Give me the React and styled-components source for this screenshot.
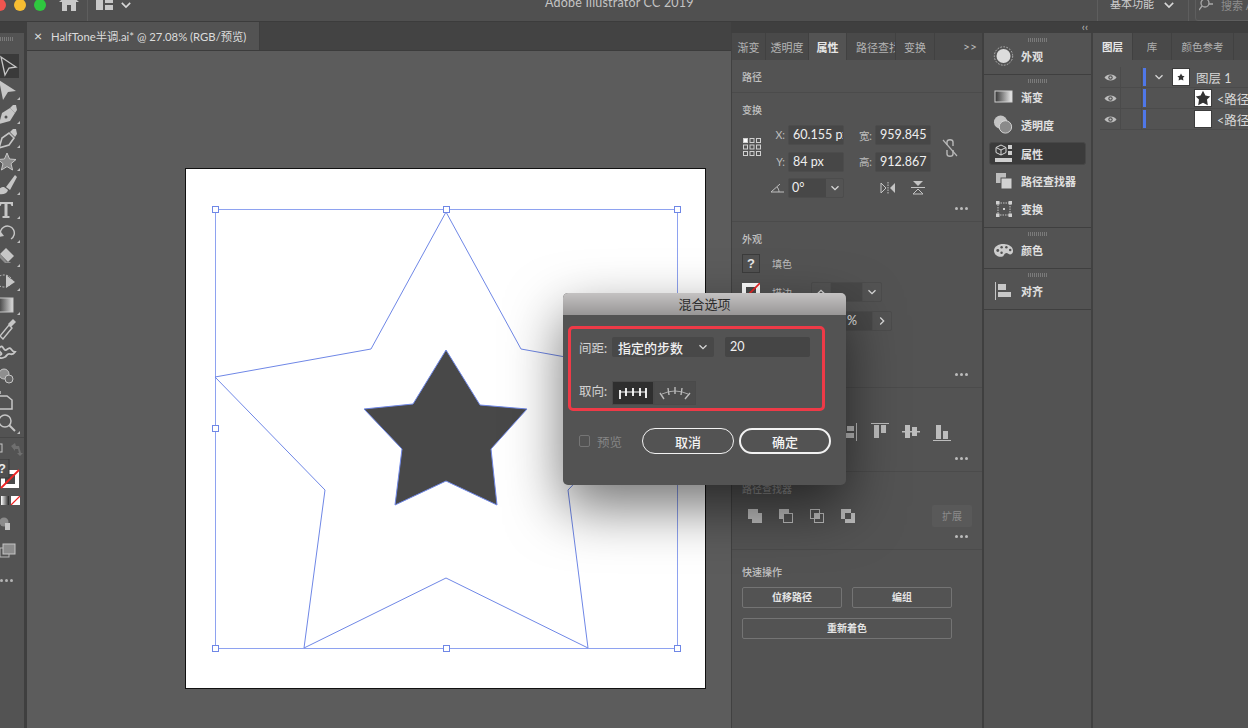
import styled, { createGlobalStyle } from "styled-components";

const GlobalStyle = createGlobalStyle`
    html, body {
        margin: 0;
        padding: 0;
        background: #3f3f3f;
    }
    * {
        box-sizing: border-box;
    }
`;

const ICON = "#c6c6c6";

// ---- toolbar drawings, all on a 22x22 box
const toolIcons = [
    { more: false, on: true, svg: <path d="M1 2l15 10-7 1-4 7z" fill="none" stroke={ICON} strokeWidth="1.3" /> },
    { more: true, svg: <path d="M-1 1l17 11-8 1-5 8z" fill={ICON} /> },
    { more: true, svg: <><path d="M-1 21l3-11 8-5 5 5-5 8z" fill={ICON} /><path d="M10 5l3-3 3 0 1 5-2 3" fill={ICON} /><circle cx="6" cy="14" r="1.5" fill="#535353" /></> },
    { more: true, svg: <><path d="M-1 21l3-10 7-5 5 5-5 7z" fill="none" stroke={ICON} strokeWidth="1.6" /><path d="M10 5l3-3 3 0 1 5-2 3z" fill={ICON} /></> },
    { more: true, svg: <path d="M7 2l2.6 6 6.4.5-5 4.2 1.6 6.3L7 15.6 1.4 19 3 12.7-2 8.5 4.4 8z" fill="#8b8b8b" stroke={ICON} strokeWidth="1" /> },
    { more: true, svg: <><path d="M6 13L15 1l2 2-7 13z" fill={ICON} /><path d="M-2 20c0-5 2-7 6-7l4 3c-1 4-5 5-10 4z" fill={ICON} /></> },
    { more: true, svg: <path d="M-1 4h14v4h-1.500l-1-2H7.500v12h2v2H2.500v-2h2V6H1.500l-1 2H-1z" fill={ICON} /> },
    { more: true, svg: <><path d="M1 14a7 7 0 1 1 10 3" fill="none" stroke={ICON} strokeWidth="1.4" /><path d="M1 10l3 4-5 1z" fill={ICON} /></> },
    { more: true, svg: <><path d="M6 2l8 8-6 6-8-8z" fill={ICON} /><path d="M0 8l-2 2 7 7h5l1-1-4 0z" fill="#8d8d8d" /></> },
    { more: true, svg: <><ellipse cx="4" cy="11" rx="8" ry="6" fill="none" stroke={ICON} strokeDasharray="2 1.5" /><path d="M6 5l9 7-9 6z" fill={ICON} /></> },
    { more: true, svg: <rect x="-4" y="4" width="17" height="14" fill="url(#toolGrad)" stroke={ICON} /> },
    { more: false, svg: <><path d="M0 18L9 7l3 3-9 11z" fill="none" stroke={ICON} strokeWidth="1.4" /><path d="M8 6l5-5 3 3-5 5z" fill={ICON} /></> },
    { more: false, svg: <path d="M0 5c3-2 3 2 5 3s4-4 6-1 4 3 4 3-2 3-5 2-3 2-5 3-5 2-6 0 4-2 2-4-3-4-1-6z" fill="none" stroke={ICON} strokeWidth="1.8" /> },
    { more: false, svg: <><circle cx="4" cy="8" r="5" fill="#8f8f8f" stroke={ICON} /><circle cx="9" cy="13" r="4" fill="#666" stroke={ICON} /></> },
    { more: false, svg: <path d="M-2 7h9l5 4v9H-2z M0 2v3" fill="none" stroke={ICON} strokeWidth="1.5" /> },
    { more: true, svg: <><circle cx="5" cy="8" r="6" fill="none" stroke={ICON} strokeWidth="1.5" /><path d="M9 12l6 6" stroke={ICON} strokeWidth="2" /></> },
];

const Dots = () => (
    <DotsRow>
        <i /><i /><i />
    </DotsRow>
);

const Chevron = ({ size = 10, color = "#d8d8d8", up, right }) => (
    <svg width={size} height={size} viewBox="0 0 10 10" style={right ? { transform: "rotate(-90deg)" } : up ? { transform: "rotate(180deg)" } : undefined}>
        <path d="M1.5 3.200L5 6.700l3.500-3.500" fill="none" stroke={color} strokeWidth="1.3" />
    </svg>
);

const dockIcons = {
    appearance: (
        <svg width="24" height="24" viewBox="0 0 24 24">
            <circle cx="12" cy="12" r="8" fill="#dcdcdc" />
            <circle cx="12" cy="12" r="10.5" fill="none" stroke="#bdbdbd" strokeDasharray="2 1.5" />
        </svg>
    ),
    gradient: (
        <svg width="20" height="16" viewBox="0 0 20 16">
            <defs>
                <linearGradient id="dockGrad">
                    <stop offset="0" stopColor="#333" />
                    <stop offset="1" stopColor="#eee" />
                </linearGradient>
            </defs>
            <rect x="1" y="2" width="17" height="11" fill="url(#dockGrad)" stroke="#d0d0d0" />
        </svg>
    ),
    opacity: (
        <svg width="22" height="22" viewBox="0 0 22 22">
            <circle cx="8" cy="8" r="7" fill="#c4c4c4" />
            <circle cx="13" cy="13" r="6.5" fill="#8a8a8a" stroke="#d6d6d6" />
        </svg>
    ),
    props: (
        <svg width="20" height="20" viewBox="0 0 20 20">
            <path d="M7 1l5 2.500v5L7 11 2 8.500v-5z" fill="none" stroke="#d8d8d8" />
            <path d="M2 3.500L7 6l5-2.500M7 6v5" fill="none" stroke="#d8d8d8" />
            <rect x="14" y="1" width="4" height="4" fill="#cfcfcf" />
            <rect x="14" y="7" width="4" height="4" fill="#cfcfcf" />
            <rect x="1" y="14" width="17" height="4" fill="#cfcfcf" />
        </svg>
    ),
    pathfinder: (
        <svg width="18" height="18" viewBox="0 0 18 18">
            <rect x="1" y="1" width="10" height="10" fill="#bdbdbd" />
            <rect x="6" y="6" width="11" height="11" fill="#d2d2d2" stroke="#535353" />
        </svg>
    ),
    transform: (
        <svg width="18" height="18" viewBox="0 0 18 18">
            <rect x="3" y="3" width="12" height="12" fill="none" stroke="#c4c4c4" strokeDasharray="1.5 1" />
            <g fill="#d0d0d0">
                <rect x="1" y="1" width="3.5" height="3.5" />
                <rect x="13.5" y="1" width="3.5" height="3.5" />
                <rect x="1" y="13.5" width="3.5" height="3.5" />
                <rect x="13.5" y="13.5" width="3.5" height="3.5" />
                <rect x="8" y="8" width="2" height="2" />
            </g>
        </svg>
    ),
    color: (
        <svg width="22" height="16" viewBox="0 0 22 16">
            <path d="M1 9c0-5 6-8 12-7 5 .8 8 3 8 7 0 3-3 5-5 3s-4 0-5 2-9 2-10-5z" fill="#cdcdcd" />
            <g fill="#535353">
                <circle cx="5" cy="8.5" r="1.5" />
                <circle cx="9" cy="5" r="1.3" />
                <circle cx="14" cy="5" r="1.3" />
                <circle cx="18" cy="8" r="1.3" />
                <circle cx="9" cy="11" r="1.3" />
            </g>
        </svg>
    ),
    align: (
        <svg width="18" height="20" viewBox="0 0 18 20">
            <rect x="0" y="1" width="1" height="18" fill="#c4c4c4" />
            <rect x="3" y="3" width="8" height="6" fill="#c8c8c8" />
            <rect x="3" y="11" width="13" height="5" fill="#c8c8c8" />
        </svg>
    ),
};

const dockGroups = [
    { items: [{ key: "appearance", label: "外观" }], height: 42 },
    {
        items: [
            { key: "gradient", label: "渐变" },
            { key: "opacity", label: "透明度" },
            { key: "props", label: "属性", active: true },
            { key: "pathfinder", label: "路径查找器" },
            { key: "transform", label: "变换" },
        ],
        height: 153,
    },
    { items: [{ key: "color", label: "颜色" }], height: 41 },
    { items: [{ key: "align", label: "对齐" }], height: 41 },
];

const panelTabs = [
    { label: "渐变", w: 34 },
    { label: "透明度", w: 43 },
    { label: "属性", w: 38, active: true },
    { label: "路径查找器", w: 49, clipped: true },
    { label: "变换", w: 39 },
];

const OUTER = "446,212 521,349 677,377 568,490 588,648 446,578 304,648 325,490 215,377 371,349";
const INNER = "446,350 480,405 527,409 491,449 497,505 446,481 395,505 402,449 364,409 413,404";
const HANDLES = [
    [215, 209], [446, 209], [677, 209],
    [215, 428], [677, 428],
    [215, 648], [446, 648], [677, 648],
];

const App = () => {
    return (
        <Page>
            <GlobalStyle />
            <TopBar>
                <TrafficLights>
                    <Light $c="#f0554f" />
                    <Light $c="#f7bd32" />
                    <Light $c="#2fc73f" />
                </TrafficLights>
                <HomeIcon width="20" height="18" viewBox="0 0 20 18">
                    <path d="M10 0L0 9h3v9h5v-6h4v6h5V9h3z" fill="#c8c8c8" />
                </HomeIcon>
                <BarDivider />
                <svg width="18" height="12" viewBox="0 0 18 12">
                    <rect x="0" y="0" width="7" height="11" fill="#c8c8c8" />
                    <rect x="9" y="0" width="8" height="4" fill="#c8c8c8" />
                    <rect x="9" y="6" width="8" height="5" fill="#c8c8c8" />
                </svg>
                <BarChevron><Chevron size={12} /></BarChevron>
                <AppTitle>Adobe Illustrator CC 2019</AppTitle>
                <BarDivider />
                <Workspace>基本功能</Workspace>
                <BarChevron $ml={9} $mr={5}><Chevron size={12} /></BarChevron>
                <BarDivider />
                <SearchBox>
                    <SearchGlass width="14" height="14" viewBox="0 0 14 14">
                        <circle cx="6" cy="5" r="4" fill="none" stroke="#a8a8a8" strokeWidth="1.3" />
                        <path d="M3 8L0 12M10 6h4" stroke="#a8a8a8" strokeWidth="1.3" />
                    </SearchGlass>
                    <SearchText>搜索 Adobe</SearchText>
                </SearchBox>
            </TopBar>

            <Workarea>
                <Toolbar>
                    <GripLine />
                    <ToolList>
                        {toolIcons.map((t, i) => (
                            <Tool key={i} $on={t.on} $more={t.more}>
                                <svg width="22" height="22" viewBox="0 0 22 22">
                                    <defs>
                                        <linearGradient id="toolGrad">
                                            <stop offset="0" stopColor="#222" />
                                            <stop offset="1" stopColor="#ddd" />
                                        </linearGradient>
                                    </defs>
                                    {t.svg}
                                </svg>
                            </Tool>
                        ))}
                    </ToolList>
                    <ToolRule />
                    <SwapRow>
                        <svg width="24" height="20" viewBox="0 0 24 20">
                            <rect x="-3" y="5" width="5" height="8" fill="none" stroke="#c6c6c6" />
                            <path d="M11 7l4-3 1 3h3l2 7 2 0-3 3-3-3h2l-1-4h-3l0 2z" fill="#6f6f6f" />
                        </svg>
                    </SwapRow>
                    <svg width="24" height="32" viewBox="0 0 24 32">
                        <rect x="1" y="11" width="18" height="18" fill="#fff" />
                        <rect x="5" y="15" width="10" height="10" fill="#4b4b4b" />
                        <path d="M1 29L19 11" stroke="#f02424" strokeWidth="1.8" />
                        <rect x="-2" y="0" width="11" height="19" fill="#505050" stroke="#3a3a3a" />
                        <text x="-2" y="14" fontSize="13" fontWeight="700" fill="#eaeaea" fontFamily="Liberation Sans, sans-serif">?</text>
                    </svg>
                    <ModeRow>
                        <svg width="20" height="9" viewBox="0 0 20 9">
                            <defs>
                                <linearGradient id="modeGrad">
                                    <stop offset="0" stopColor="#fff" />
                                    <stop offset="1" stopColor="#222" />
                                </linearGradient>
                            </defs>
                            <rect x="0" y="0" width="8" height="9" fill="url(#modeGrad)" />
                            <rect x="10" y="0" width="9" height="9" fill="#fff" />
                            <path d="M10 9L19 0" stroke="#f02424" strokeWidth="1.2" />
                        </svg>
                    </ModeRow>
                    <DrawRow>
                        <svg width="20" height="18" viewBox="0 0 20 18">
                            <circle cx="4" cy="7" r="4.5" fill="#8b8b8b" />
                            <rect x="5" y="8" width="5" height="7" fill="#c4c4c4" />
                        </svg>
                    </DrawRow>
                    <DrawRow>
                        <svg width="20" height="18" viewBox="0 0 20 18">
                            <rect x="0" y="5" width="9" height="9" fill="none" stroke="#b8b8b8" />
                            <rect x="3" y="1" width="12" height="10" fill="#8c8c8c" stroke="#c4c4c4" />
                        </svg>
                    </DrawRow>
                    <ToolDots>
                        <i /><i /><i />
                    </ToolDots>
                </Toolbar>

                <DocColumn>
                    <DocTabs>
                        <DocTab>
                            <CloseMark>×</CloseMark>
                            HalfTone半调.ai* @ 27.08% (RGB/预览)
                        </DocTab>
                    </DocTabs>
                    <Canvas>
                        <Artboard>
                            <svg width="519" height="519" viewBox="186 169 519 519">
                                <rect x="215.5" y="209.5" width="462" height="439" fill="none" stroke="#8ea2f0" />
                                <polygon points={OUTER} fill="none" stroke="#6f87e6" />
                                <polygon points={INNER} fill="#484848" stroke="#6f87e6" />
                                {HANDLES.map(([x, y]) => (
                                    <rect key={`${x}-${y}`} x={x - 2.5} y={y - 2.5} width="6" height="6" fill="#fff" stroke="#6f87e6" />
                                ))}
                            </svg>
                        </Artboard>
                    </Canvas>
                </DocColumn>

                <PropsPanel>
                    <TabStrip>
                        {panelTabs.map(t => (
                            <PanelTab key={t.label} $w={t.w} $active={t.active} $clipped={t.clipped}>{t.label}</PanelTab>
                        ))}
                        <TabFill>&gt;&gt;</TabFill>
                    </TabStrip>

                    <Section $h={33}>
                        <Heading>路径</Heading>
                    </Section>

                    <Section $h={129}>
                        <Heading>变换</Heading>
                        <TransformBody>
                            <RefPoint width="20" height="20" viewBox="0 0 20 20">
                                {[1.5, 8, 14.5].map(y => [1.5, 8, 14.5].map(x => (
                                    <rect key={`${x}${y}`} x={x} y={y} width="4" height="4" fill={x < 2 && y < 2 ? "#fff" : "none"} stroke="#d0d0d0" />
                                )))}
                            </RefPoint>
                            <FieldGrid>
                                <FieldLabel>X:</FieldLabel>
                                <Field><Clip>60.155 px</Clip></Field>
                                <FieldLabel>宽:</FieldLabel>
                                <Field><Clip>959.845</Clip></Field>
                                <FieldLabel>Y:</FieldLabel>
                                <Field>84 px</Field>
                                <FieldLabel>高:</FieldLabel>
                                <Field><Clip>912.867</Clip></Field>
                                <FieldLabel>
                                    <svg width="15" height="10" viewBox="0 0 15 10">
                                        <path d="M14 9H1L10 1M7 4c1 1 2 3 2 5" fill="none" stroke="#c0c0c0" />
                                    </svg>
                                </FieldLabel>
                                <AngleField>
                                    <AngleValue>0°</AngleValue>
                                    <AngleDrop><Chevron /></AngleDrop>
                                </AngleField>
                                <span />
                                <FlipIcons>
                                    <svg width="16" height="12" viewBox="0 0 16 12">
                                        <path d="M1 1l5 5-5 5z" fill="none" stroke="#c4c4c4" />
                                        <path d="M15 1l-5 5 5 5z" fill="#c4c4c4" />
                                        <path d="M8 0v12" stroke="#c4c4c4" strokeDasharray="1.5 1" />
                                    </svg>
                                    <svg width="14" height="14" viewBox="0 0 14 14">
                                        <path d="M2 0h10L7 5z" fill="#c4c4c4" />
                                        <path d="M2 13h10L7 8z" fill="none" stroke="#c4c4c4" />
                                        <path d="M0 6.500h14" stroke="#c4c4c4" />
                                    </svg>
                                </FlipIcons>
                            </FieldGrid>
                            <LinkIcon width="18" height="20" viewBox="0 0 18 20">
                                <path d="M6 4c0-3 6-3 6 0v4M6 12v4c0 3 6 3 6 0v-4M6 4v3" fill="none" stroke="#b8b8b8" strokeWidth="1.4" />
                                <path d="M2 2l14 16" stroke="#b8b8b8" strokeWidth="1.2" />
                            </LinkIcon>
                        </TransformBody>
                        <Dots />
                    </Section>

                    <Section $h={166}>
                        <Heading>外观</Heading>
                        <SwatchRow>
                            <QuestionBox>?</QuestionBox>
                            <RowLabel>填色</RowLabel>
                        </SwatchRow>
                        <StrokeRow>
                            <StrokeSwatch width="18" height="18" viewBox="0 0 18 18">
                                <rect x="0" y="0" width="18" height="18" fill="#fff" />
                                <rect x="4" y="4" width="10" height="10" fill="#4b4b4b" />
                                <path d="M0 18L18 0" stroke="#f02424" strokeWidth="1.6" />
                            </StrokeSwatch>
                            <RowLabel>描边</RowLabel>
                            <Stepper>
                                <StepBtn><Chevron up /></StepBtn>
                                <StepMid />
                                <StepBtn><Chevron /></StepBtn>
                            </Stepper>
                        </StrokeRow>
                        <OpacityRow>
                            <Stepper>
                                <StepMid $w={52} $percent>%</StepMid>
                                <StepBtn><Chevron right /></StepBtn>
                            </Stepper>
                        </OpacityRow>
                        <Dots />
                    </Section>

                    <Section $h={84}>
                        <Heading>对齐</Heading>
                        <AlignRow>
                            {[0, 1, 2].map(i => <AlignSpacer key={i} />)}
                            <svg width="14" height="18" viewBox="0 0 14 18">
                                <rect x="3" y="3" width="7" height="5" fill="#bdbdbd" />
                                <rect x="0" y="10" width="10" height="5" fill="#bdbdbd" />
                                <rect x="12" y="0" width="1" height="18" fill="#bdbdbd" />
                            </svg>
                            <svg width="18" height="18" viewBox="0 0 18 18">
                                <rect x="0" y="0" width="18" height="1" fill="#bdbdbd" />
                                <rect x="3" y="2" width="5" height="13" fill="#bdbdbd" />
                                <rect x="10" y="2" width="5" height="8" fill="#bdbdbd" />
                            </svg>
                            <svg width="18" height="18" viewBox="0 0 18 18">
                                <rect x="0" y="8" width="18" height="1.5" fill="#bdbdbd" />
                                <rect x="3" y="2" width="5" height="13" fill="#bdbdbd" />
                                <rect x="10" y="4" width="5" height="9" fill="#bdbdbd" />
                            </svg>
                            <svg width="18" height="18" viewBox="0 0 18 18">
                                <rect x="0" y="17" width="18" height="1" fill="#bdbdbd" />
                                <rect x="3" y="2" width="5" height="14" fill="#bdbdbd" />
                                <rect x="10" y="8" width="5" height="8" fill="#bdbdbd" />
                            </svg>
                        </AlignRow>
                        <Dots />
                    </Section>

                    <Section $h={78}>
                        <Heading $dim>路径查找器</Heading>
                        <FinderRow>
                            <FinderIcons>
                                <svg width="15" height="15" viewBox="0 0 15 15">
                                    <rect x="0" y="0" width="10" height="10" fill="#bdbdbd" />
                                    <rect x="4" y="4" width="10" height="10" fill="#bdbdbd" />
                                </svg>
                                <svg width="15" height="15" viewBox="0 0 15 15">
                                    <path d="M0 0h10v4H4v6H0z" fill="#bdbdbd" />
                                    <rect x="4.5" y="4.5" width="9" height="9" fill="none" stroke="#bdbdbd" />
                                </svg>
                                <svg width="15" height="15" viewBox="0 0 15 15">
                                    <rect x=".5" y=".5" width="9" height="9" fill="none" stroke="#bdbdbd" />
                                    <rect x="4.5" y="4.5" width="9" height="9" fill="none" stroke="#bdbdbd" />
                                    <rect x="4" y="4" width="6" height="6" fill="#bdbdbd" />
                                </svg>
                                <svg width="15" height="15" viewBox="0 0 15 15">
                                    <rect x="0" y="0" width="10" height="10" fill="#bdbdbd" />
                                    <rect x="4" y="4" width="10" height="10" fill="#bdbdbd" />
                                    <rect x="4" y="4" width="6" height="6" fill="#535353" />
                                </svg>
                            </FinderIcons>
                            <ExpandButton>扩展</ExpandButton>
                        </FinderRow>
                        <Dots />
                    </Section>

                    <QuickSection>
                        <Heading>快速操作</Heading>
                        <QuickGrid>
                            <QuickButton>位移路径</QuickButton>
                            <QuickButton>编组</QuickButton>
                            <QuickButton $wide>重新着色</QuickButton>
                        </QuickGrid>
                    </QuickSection>
                </PropsPanel>

                <DockColumn>
                    <CollapseStrip>‹‹</CollapseStrip>
                    <Dock>
                        {dockGroups.map((g, i) => (
                            <DockGroup key={i} $h={g.height}>
                                <DockGrip />
                                {g.items.map(item => (
                                    <DockItem key={item.key} $active={item.active}>
                                        <DockIcon>{dockIcons[item.key]}</DockIcon>
                                        {item.label}
                                    </DockItem>
                                ))}
                            </DockGroup>
                        ))}
                    </Dock>
                </DockColumn>

                <LayersPanel>
                    <TabStrip>
                        <LayerTab $w={40} $active>图层</LayerTab>
                        <LayerTab $w={39}>库</LayerTab>
                        <LayerTab $w={62}>颜色参考</LayerTab>
                        <TabFill />
                    </TabStrip>
                    <LayerList>
                        <LayerRow>
                            <EyeCell><Eye /></EyeCell>
                            <BlankCell />
                            <BlueBar />
                            <LayerChevron><Chevron /></LayerChevron>
                            <Thumb>
                                <svg width="8" height="8" viewBox="0 0 20 20">
                                    <polygon points="10,1 13,7 19,8 15,12 16,19 10,16 4,19 5,12 1,8 7,7" fill="#333" />
                                </svg>
                            </Thumb>
                            <LayerName>图层 1</LayerName>
                        </LayerRow>
                        <LayerRow>
                            <EyeCell><Eye /></EyeCell>
                            <BlankCell />
                            <BlueBar />
                            <SubIndent />
                            <Thumb>
                                <svg width="16" height="16" viewBox="0 0 20 20">
                                    <polygon points="10,1 13,7 19,8 15,12 16,19 10,16 4,19 5,12 1,8 7,7" fill="#333" />
                                </svg>
                            </Thumb>
                            <LayerName $path>&lt;路径&gt;</LayerName>
                        </LayerRow>
                        <LayerRow>
                            <EyeCell><Eye /></EyeCell>
                            <BlankCell />
                            <BlueBar />
                            <SubIndent />
                            <Thumb />
                            <LayerName $path>&lt;路径&gt;</LayerName>
                        </LayerRow>
                    </LayerList>
                </LayersPanel>
            </Workarea>

            <Dialog>
                <DialogTitle>混合选项</DialogTitle>
                <RedFrame>
                    <SpacingRow>
                        <DialogLabel>间距:</DialogLabel>
                        <DialogSelect>
                            指定的步数
                            <Chevron />
                        </DialogSelect>
                        <DialogInput>20</DialogInput>
                    </SpacingRow>
                    <OrientRow>
                        <DialogLabel $raised>取向:</DialogLabel>
                        <Segment $on>
                            <svg width="30" height="16" viewBox="0 0 30 16">
                                <path d="M2 7h26" stroke="#fff" strokeWidth="1.2" />
                                <path d="M2 5v9M8 3v8M15 3v8M22 3v8M28 3v10" stroke="#fff" strokeWidth="1.8" />
                            </svg>
                        </Segment>
                        <Segment>
                            <svg width="34" height="16" viewBox="0 0 34 16">
                                <path d="M4 9q13-6 26 0" fill="none" stroke="#aaa" />
                                <path d="M2 8l4 6M10 3l1 7M17 2v7M24 3l-1 7M32 8l-5 6" stroke="#bbb" strokeWidth="1.4" />
                            </svg>
                        </Segment>
                    </OrientRow>
                </RedFrame>
                <DialogFooter>
                    <PreviewBox />
                    <PreviewText>预览</PreviewText>
                    <PillButton>取消</PillButton>
                    <PillButton $primary>确定</PillButton>
                </DialogFooter>
            </Dialog>
        </Page>
    );
};

const Eye = () => (
    <svg width="13" height="9" viewBox="0 0 13 9">
        <path d="M.5 4.500C3 .5 10 .5 12.500 4.500 10 8.500 3 8.500 .5 4.500z" fill="#bdbdbd" />
        <circle cx="6.5" cy="4.5" r="2.2" fill="#535353" />
        <circle cx="6.5" cy="4.5" r="1.1" fill="#bdbdbd" />
    </svg>
);

export default App;

const FONT = `Lato, "Noto Sans CJK SC", sans-serif`;

const Page = styled.div`
    position: relative;
    width: 1248px;
    height: 728px;
    overflow: hidden;
    display: flex;
    flex-direction: column;
    background: #3f3f3f;
    font-family: ${FONT};
    color: #cfcfcf;
    font-size: 11px;
`;

const TopBar = styled.div`
    height: 22px;
    flex: none;
    display: flex;
    align-items: flex-end;
    background: #505050;
    border-bottom: 1px solid #3c3c3c;
    overflow: hidden;
    padding-bottom: 10px;
    > * {
        flex-shrink: 0;
    }
`;

const TrafficLights = styled.div`
    display: flex;
    gap: 8px;
    margin-left: -6px;
`;

const Light = styled.span`
    width: 12px;
    height: 12px;
    border-radius: 50%;
    background: ${props => props.$c};
`;

const HomeIcon = styled.svg`
    margin-left: 13px;
    flex: none;
`;

const BarDivider = styled.span`
    width: 1px;
    height: 24px;
    margin: 0 8px -10px;
    background: #5e5e5e;
    flex: none;
`;

const BarChevron = styled.span`
    display: flex;
    margin-left: ${props => props.$ml || 6}px;
    margin-right: ${props => props.$mr || 0}px;
`;

const AppTitle = styled.div`
    font-size: 12.5px;
    line-height: 16px;
    color: #c4c4c4;
    letter-spacing: 0.2px;
    margin-left: 413px;
    width: 544px;
    flex: none;
    white-space: nowrap;
`;

const Workspace = styled.div`
    font-size: 11px;
    line-height: 15px;
    color: #cfcfcf;
    margin-left: 4px;
    white-space: nowrap;
`;

const SearchBox = styled.div`
    display: flex;
    align-items: center;
    gap: 8px;
    width: 60px;
    flex: none;
    height: 24px;
    margin: 0 0 -10px -2px;
    padding: 0 0 8px 3px;
    border: 1px solid #5e5e5e;
    border-radius: 3px;
    overflow: hidden;
`;

const SearchGlass = styled.svg`
    flex: none;
`;

const SearchText = styled.span`
    color: #8d8d8d;
    font-size: 11px;
    white-space: nowrap;
`;

const Workarea = styled.div`
    flex: 1;
    min-height: 0;
    display: flex;
`;

const Toolbar = styled.div`
    width: 24px;
    flex: none;
    margin: 11px 3px 0 0;
    background: #535353;
    overflow: hidden;
    display: flex;
    flex-direction: column;
    align-items: flex-start;
`;

const GripLine = styled.div`
    width: 14px;
    height: 4px;
    margin: 4px 0 13px;
    background: repeating-linear-gradient(90deg, #7a7a7a 0 1px, transparent 1px 2px);
`;

const ToolList = styled.div`
    display: flex;
    flex-direction: column;
`;

const Tool = styled.div`
    position: relative;
    width: 24px;
    height: 23.9px;
    display: flex;
    align-items: center;
    justify-content: flex-start;
    ${props => props.$on && "background: linear-gradient(90deg, #3a3a3a 0 19px, transparent 19px);"}
    &::after {
        content: "";
        display: ${props => (props.$more ? "block" : "none")};
        position: absolute;
        right: 4px;
        bottom: 2px;
        border-style: solid;
        border-width: 0 0 3px 3px;
        border-color: transparent transparent #bdbdbd transparent;
    }
`;

const ToolRule = styled.div`
    width: 100%;
    height: 1px;
    margin-top: 1px;
    background: #474747;
`;

const SwapRow = styled.div`
    height: 21px;
    display: flex;
    align-items: center;
`;

const ModeRow = styled.div`
    display: flex;
    height: 9px;
    margin: 5px 0 0 1px;
`;

const DrawRow = styled.div`
    display: flex;
    height: 18px;
    margin-top: 10px;
`;

const ToolDots = styled.div`
    display: flex;
    gap: 2px;
    margin-top: 18px;
    i {
        width: 3px;
        height: 3px;
        border-radius: 50%;
        background: #b4b4b4;
    }
`;

const DocColumn = styled.div`
    width: 704px;
    flex: none;
    display: flex;
    flex-direction: column;
`;

const DocTabs = styled.div`
    height: 29px;
    flex: none;
    display: flex;
    background: #434343;
    border-bottom: 1px solid #3c3c3c;
`;

const DocTab = styled.div`
    width: 233px;
    display: flex;
    align-items: center;
    background: #535353;
    border-right: 1px solid #3f3f3f;
    color: #dcdcdc;
    font-size: 11.3px;
    white-space: nowrap;
    padding-left: 7px;
`;

const CloseMark = styled.span`
    width: 17px;
    font-size: 14px;
    line-height: 14px;
    color: #e2e2e2;
`;

const Canvas = styled.div`
    flex: 1;
    background: #5c5c5c;
    padding: 117px 0 0 158px;
`;

const Artboard = styled.div`
    width: 521px;
    height: 521px;
    background: #fff;
    border: 1px solid #111;
    display: flex;
`;

const PropsPanel = styled.div`
    width: 251px;
    flex: none;
    margin-top: 11px;
    background: #535353;
    border-left: 1px solid #414141;
    display: flex;
    flex-direction: column;
`;

const TabStrip = styled.div`
    height: 27px;
    flex: none;
    display: flex;
    background: #494949;
`;

const PanelTab = styled.div`
    width: ${props => props.$w}px;
    flex: none;
    display: flex;
    align-items: center;
    justify-content: ${props => (props.$clipped ? "flex-start" : "center")};
    padding-left: ${props => (props.$clipped ? 9 : 0)}px;
    overflow: hidden;
    white-space: nowrap;
    font-size: 11px;
    color: ${props => (props.$active ? "#e8e8e8" : "#b4b4b4")};
    font-weight: ${props => (props.$active ? 700 : 400)};
    background: ${props => (props.$active ? "#535353" : "transparent")};
    border-right: 1px solid #414141;
`;

const TabFill = styled.div`
    flex: 1;
    display: flex;
    align-items: center;
    justify-content: flex-end;
    padding-right: 5px;
    font-size: 12px;
    color: #b8b8b8;
    overflow: hidden;
`;

const Section = styled.div`
    position: relative;
    height: ${props => props.$h}px;
    flex: none;
    padding: 10px 10px 0;
    border-bottom: 1px solid #4b4b4b;
`;

const Heading = styled.div`
    font-size: 10px;
    line-height: 14px;
    font-weight: 500;
    color: ${props => (props.$dim ? "#8f8f8f" : "#c2c2c2")};
`;

const DotsRow = styled.div`
    position: absolute;
    right: 14px;
    bottom: 11px;
    display: flex;
    gap: 1.5px;
    i {
        width: 3.5px;
        height: 3.5px;
        border-radius: 50%;
        background: #bcbcbc;
    }
`;

const TransformBody = styled.div`
    display: flex;
    align-items: flex-start;
    margin-top: 8px;
`;

const RefPoint = styled.svg`
    flex: none;
    margin-top: 12px;
`;

const FieldGrid = styled.div`
    display: grid;
    grid-template-columns: 26px 56px 31px 56px;
    grid-auto-rows: 20px;
    row-gap: 6.5px;
    align-items: center;
`;

const FieldLabel = styled.div`
    justify-self: end;
    padding-right: 3px;
    color: #bdbdbd;
    font-size: 10.5px;
    display: flex;
`;

const Field = styled.div`
    width: 56px;
    height: 20px;
    padding-left: 4px;
    background: #474747;
    border: 1px solid #4c4c4c;
    border-radius: 2px;
    color: #efefef;
    font-size: 12.5px;
    line-height: 18px;
    overflow: hidden;
    white-space: nowrap;
`;

const Clip = styled.span`
    display: block;
    overflow: hidden;
`;

const AngleField = styled.div`
    display: flex;
    width: 56px;
    height: 20px;
    border: 1px solid #4c4c4c;
    border-radius: 2px;
`;

const AngleValue = styled.div`
    flex: 1;
    background: #474747;
    padding-left: 3px;
    color: #efefef;
    font-size: 12.5px;
    line-height: 18px;
`;

const AngleDrop = styled.div`
    width: 18px;
    display: flex;
    align-items: center;
    justify-content: center;
    border-left: 1px solid #474747;
`;

const FlipIcons = styled.div`
    display: flex;
    align-items: center;
    gap: 15px;
    padding-left: 5px;
`;

const LinkIcon = styled.svg`
    flex: none;
    margin: 13px 0 0 10px;
`;

const SwatchRow = styled.div`
    display: flex;
    align-items: center;
    margin-top: 8px;
`;

const QuestionBox = styled.div`
    width: 18px;
    height: 19px;
    border: 1px solid #3c3c3c;
    background: #515151;
    color: #e6e6e6;
    font: 700 13px/17px "Liberation Sans", sans-serif;
    text-align: center;
`;

const RowLabel = styled.span`
    margin-left: 12px;
    color: #bdbdbd;
    font-size: 10px;
    width: 39px;
`;

const StrokeRow = styled.div`
    display: flex;
    align-items: center;
    margin-top: 9px;
`;

const StrokeSwatch = styled.svg`
    flex: none;
`;

const Stepper = styled.div`
    display: flex;
    height: 20px;
    border: 1px solid #4c4c4c;
    border-radius: 2px;
`;

const StepBtn = styled.div`
    width: 18px;
    display: flex;
    align-items: center;
    justify-content: center;
`;

const StepMid = styled.div`
    width: ${props => props.$w || 33}px;
    background: #484848;
    border: solid #4f4f4f;
    border-width: 0 1px;
    color: #e6e6e6;
    font-size: 12.5px;
    line-height: 18px;
    text-align: ${props => (props.$percent ? "right" : "center")};
    padding-right: ${props => (props.$percent ? 15 : 0)}px;
`;

const OpacityRow = styled.div`
    display: flex;
    justify-content: flex-end;
    margin: 9px 80px 0 0;
`;

const AlignRow = styled.div`
    display: flex;
    align-items: center;
    justify-content: flex-end;
    gap: 13px;
    height: 18px;
    margin: 11px 21px 0 0;
`;

const AlignSpacer = styled.span`
    width: 18px;
`;

const FinderRow = styled.div`
    display: flex;
    align-items: center;
    justify-content: space-between;
    margin-top: 9px;
`;

const FinderIcons = styled.div`
    display: flex;
    gap: 16px;
    padding-left: 6px;
`;

const ExpandButton = styled.div`
    width: 40px;
    height: 22px;
    background: #595959;
    border-radius: 2px;
    color: #8c8c8c;
    font-size: 10px;
    line-height: 22px;
    text-align: center;
`;

const QuickSection = styled.div`
    padding: 15px 10px 0;
`;

const QuickGrid = styled.div`
    display: grid;
    grid-template-columns: 100px 100px;
    grid-auto-rows: 21px;
    gap: 10px;
    margin-top: 8px;
`;

const QuickButton = styled.div`
    grid-column: ${props => (props.$wide ? "1 / 3" : "auto")};
    border: 1px solid #747474;
    border-radius: 2px;
    color: #e4e4e4;
    font-size: 10px;
    font-weight: 700;
    line-height: 19px;
    text-align: center;
`;

const DockColumn = styled.div`
    width: 111px;
    flex: none;
    display: flex;
    flex-direction: column;
    padding-left: 2px;
`;

const CollapseStrip = styled.div`
    height: 11px;
    flex: none;
    text-align: right;
    padding-right: 5px;
    font-size: 11px;
    line-height: 10px;
    color: #bcbcbc;
`;

const Dock = styled.div`
    flex: 1;
    background: #535353;
    border-right: 2px solid #414141;
`;

const DockGroup = styled.div`
    height: ${props => props.$h}px;
    border-bottom: 1px solid #3f3f3f;
    padding-top: 4px;
    &:first-child {
        padding-top: 5px;
    }
`;

const DockGrip = styled.div`
    width: 20px;
    height: 4px;
    margin: 0 auto;
    background: repeating-linear-gradient(90deg, #7a7a7a 0 1px, transparent 1px 2px);
`;

const DockItem = styled.div`
    display: flex;
    align-items: center;
    height: 28px;
    margin: 0 ${props => (props.$active ? 5 : 0)}px;
    padding-left: ${props => (props.$active ? 3 : 9)}px;
    color: #e0e0e0;
    font-size: 11px;
    font-weight: 700;
    ${props => props.$active && `
        height: 23px;
        margin-top: 3px;
        margin-bottom: 2px;
        background: #3b3b3b;
        border: 1px solid #474747;
        border-radius: 3px;
    `}
`;

const DockIcon = styled.span`
    width: 28px;
    flex: none;
    display: flex;
    align-items: center;
    justify-content: center;
    padding-right: 7px;
`;

const LayersPanel = styled.div`
    flex: 1;
    min-width: 0;
    margin-top: 11px;
    background: #535353;
    display: flex;
    flex-direction: column;
    overflow: hidden;
`;

const LayerTab = styled.div`
    width: ${props => props.$w}px;
    flex: none;
    display: flex;
    align-items: center;
    justify-content: center;
    font-size: 10.5px;
    white-space: nowrap;
    color: ${props => (props.$active ? "#e8e8e8" : "#b0b0b0")};
    font-weight: ${props => (props.$active ? 700 : 400)};
    background: ${props => (props.$active ? "#535353" : "transparent")};
    border-right: 1px solid #414141;
`;

const LayerList = styled.div`
    margin: 7px 0 0 7px;
`;

const LayerRow = styled.div`
    height: 21px;
    width: 160px;
    display: flex;
    align-items: center;
    border-bottom: 1px solid #4b4b4b;
`;

const EyeCell = styled.div`
    width: 21px;
    height: 100%;
    flex: none;
    display: flex;
    align-items: center;
    justify-content: center;
    border-right: 1px solid #4b4b4b;
`;

const BlankCell = styled.div`
    width: 21px;
    height: 100%;
    flex: none;
    border-right: 1px solid #4b4b4b;
`;

const BlueBar = styled.div`
    width: 3px;
    height: 18px;
    margin-left: 1px;
    flex: none;
    background: #4f77e8;
`;

const LayerChevron = styled.div`
    width: 26px;
    padding-left: 8px;
    display: flex;
    flex: none;
`;

const SubIndent = styled.div`
    width: 48px;
    flex: none;
`;

const Thumb = styled.div`
    width: 18px;
    height: 18px;
    flex: none;
    background: #fff;
    border: 1px solid #3c3c3c;
    display: flex;
    align-items: center;
    justify-content: center;
`;

const LayerName = styled.div`
    margin-left: ${props => (props.$path ? 5 : 6)}px;
    color: #d8d8d8;
    font-size: 12.5px;
    white-space: nowrap;
`;

const Dialog = styled.div`
    position: absolute;
    left: 563px;
    top: 293px;
    width: 283px;
    height: 192px;
    background: #535353;
    border-radius: 5px;
    box-shadow: 0 22px 55px rgba(0, 0, 0, 0.55);
    display: flex;
    flex-direction: column;
    overflow: hidden;
`;

const DialogTitle = styled.div`
    height: 22px;
    flex: none;
    background: linear-gradient(#c4c2c2, #989696);
    color: #2b2b2b;
    font-size: 13px;
    line-height: 22px;
    text-align: center;
`;

const RedFrame = styled.div`
    width: 257px;
    height: 85px;
    margin: 11px 0 0 5px;
    padding: 8px 0 0 8px;
    border: 3px solid #ee3a47;
    border-radius: 5px;
`;

const SpacingRow = styled.div`
    display: flex;
    align-items: center;
`;

const DialogLabel = styled.div`
    width: 33px;
    flex: none;
    color: #d4d4d4;
    font-size: 12.5px;
    white-space: nowrap;
    margin-bottom: ${props => (props.$raised ? 5 : 0)}px;
`;

const DialogSelect = styled.div`
    width: 102px;
    height: 20px;
    flex: none;
    padding: 0 6px;
    display: flex;
    align-items: center;
    justify-content: space-between;
    background: #484848;
    border-radius: 2px;
    color: #f0f0f0;
    font-size: 13px;
    font-weight: 500;
`;

const DialogInput = styled.div`
    width: 85px;
    height: 20px;
    flex: none;
    margin-left: 11px;
    padding-left: 5px;
    background: #454545;
    border-radius: 2px;
    color: #f0f0f0;
    font-size: 12.5px;
    line-height: 20px;
`;

const OrientRow = styled.div`
    display: flex;
    align-items: center;
    margin-top: 24px;
`;

const Segment = styled.div`
    width: 42px;
    height: 24px;
    flex: none;
    display: flex;
    align-items: center;
    justify-content: center;
    background: ${props => (props.$on ? "#2f2f2f" : "#4c4c4c")};
    border: 1px solid #4a4a4a;
`;

const DialogFooter = styled.div`
    display: flex;
    align-items: center;
    margin-top: 17px;
    padding-left: 16px;
`;

const PreviewBox = styled.span`
    width: 11px;
    height: 12px;
    flex: none;
    border: 1px solid #757575;
    border-radius: 2px;
`;

const PreviewText = styled.span`
    width: 45px;
    margin-left: 7px;
    color: #858585;
    font-size: 12.5px;
`;

const PillButton = styled.div`
    width: 92px;
    height: 26px;
    flex: none;
    margin-right: 5px;
    border: ${props => (props.$primary ? "2.5px" : "1.5px")} solid #f2f2f2;
    border-radius: 13px;
    color: #f4f4f4;
    font-size: 13px;
    font-weight: 500;
    display: flex;
    align-items: center;
    justify-content: center;
`;
